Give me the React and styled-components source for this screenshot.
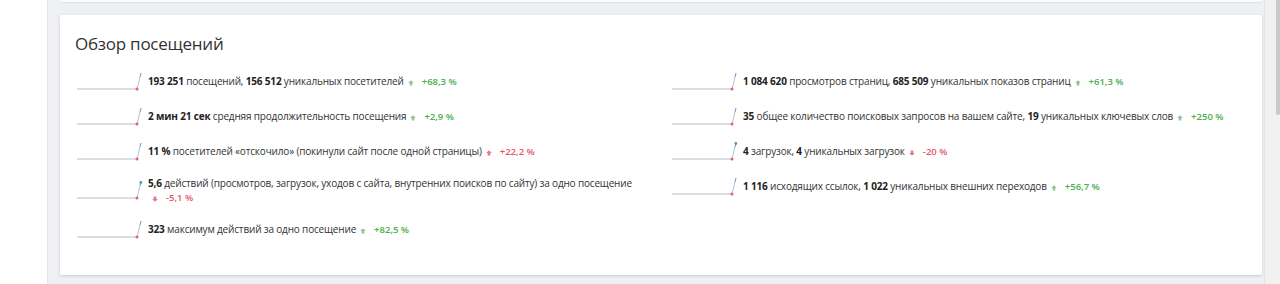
import React from "react";
import styled, { createGlobalStyle } from "styled-components";

const Global = createGlobalStyle`
  html, body { margin: 0; padding: 0; background: #ffffff; }
  body { font-family: "Open Sans", "Liberation Sans", sans-serif; color: #333; }
`;

const Page = styled.div`
  display: flex;
  height: 284px;
  overflow: hidden;
`;

const LeftBlank = styled.div`
  width: 47px;
  flex: none;
  background: #ffffff;
`;

const Main = styled.div`
  flex: 1;
  background: #eef0f3;
  border-left: 1px solid #e3e5e8;
  padding: 0 2px 0 12px;
  display: flex;
  flex-direction: column;
`;

const PrevCard = styled.div`
  height: 2px;
  background: #fbfbfc;
  box-shadow: 0 1px 1px rgba(0, 0, 0, 0.06);
  margin-bottom: 13px;
`;

const Card = styled.div`
  background: #ffffff;
  border-radius: 2px;
  box-shadow: 0 1px 3px rgba(0, 0, 0, 0.16);
  padding: 16px 15px 29px;
  height: 260px;
  box-sizing: border-box;
`;

const Title = styled.h2`
  margin: 0 0 7px;
  font-size: 17px;
  line-height: 26px;
  font-weight: 400;
  letter-spacing: -0.25px;
  color: #333;
`;

const Columns = styled.div`
  display: grid;
  grid-template-columns: 595px 1fr;
`;

const Column = styled.div`
  display: flex;
  flex-direction: column;
`;

const Row = styled.div`
  display: flex;
  align-items: center;
  padding: 7px 0;
  min-height: 21px;
`;

const Spark = styled.svg`
  flex: none;
  width: 68px;
  height: 21px;
  margin-right: 5px;
`;

const Text = styled.div`
  font-size: 10px;
  line-height: 14px;
  letter-spacing: -0.17px;
  color: #333;
  b { font-weight: 700; color: #222; }
`;

const Delta = styled.span`
  display: inline-flex;
  align-items: center;
  margin-left: 4px;
  white-space: nowrap;
  vertical-align: baseline;
`;

const DeltaIcon = styled.svg`
  width: 6px;
  height: 6px;
  margin-right: 8px;
  position: relative;
  top: 1px;
`;

const DeltaText = styled.span`
  font-size: 9.5px;
  font-weight: 600;
  letter-spacing: 0;
  color: ${(p) => (p.$good ? "#4cae4c" : "#e5566c")};
`;

const Scrollbar = styled.div`
  width: 15px;
  flex: none;
  background: #f1f1f2;
  border-left: 1px solid #e4e4e6;
  display: flex;
  justify-content: flex-end;
`;

const Thumb = styled.div`
  width: 4px;
  height: 115px;
  background: #c9c9cc;
  border-radius: 0 0 2px 2px;
`;

function Sparkline({ topDot }) {
  return (
    <Spark viewBox="0 0 68 21">
      <line x1="2" y1="18" x2="62" y2="18" stroke="#b3bfcc" strokeWidth="1" />
      <line x1="62" y1="18" x2="65" y2="6" stroke="#b6c2d0" strokeWidth="1" />
      <line x1="65" y1="6" x2="66" y2="2" stroke="#5d97d6" strokeWidth="1" />
      {topDot && <circle cx="65.8" cy="2.5" r="1.4" fill="#3fa7a0" />}
      <circle cx="62" cy="18" r="1.5" fill="#ee5a76" />
    </Spark>
  );
}

function Change({ value, up, good }) {
  const fill = good ? "#93c793" : "#e7788a";
  return (
    <Delta>
      <DeltaIcon viewBox="0 0 6 6">
        {up ? (
          <path d="M3 0.3 L5.8 3 L4.3 3 L4.3 5.6 L1.7 5.6 L1.7 3 L0.2 3 Z" fill={fill} />
        ) : (
          <path d="M3 5.7 L5.8 3 L4.3 3 L4.3 0.4 L1.7 0.4 L1.7 3 L0.2 3 Z" fill={fill} />
        )}
      </DeltaIcon>
      <DeltaText $good={good}>{value}</DeltaText>
    </Delta>
  );
}

const left = [
  {
    body: (
      <>
        <b>193 251</b> посещений, <b>156 512</b> уникальных посетителей
      </>
    ),
    change: { value: "+68,3 %", up: true, good: true },
  },
  {
    body: (
      <>
        <b>2 мин 21 сек</b> средняя продолжительность посещения
      </>
    ),
    change: { value: "+2,9 %", up: true, good: true },
  },
  {
    body: (
      <>
        <b>11 %</b> посетителей «отскочило» (покинули сайт после одной страницы)
      </>
    ),
    change: { value: "+22,2 %", up: true, good: false },
  },
  {
    body: (
      <>
        <b>5,6</b> действий (просмотров, загрузок, уходов с сайта, внутренних поисков по сайту) за одно посещение
      </>
    ),
    change: { value: "-5,1 %", up: false, good: false },
    topDot: true,
    wrap: true,
  },
  {
    body: (
      <>
        <b>323</b> максимум действий за одно посещение
      </>
    ),
    change: { value: "+82,5 %", up: true, good: true },
  },
];

const right = [
  {
    body: (
      <>
        <b>1 084 620</b> просмотров страниц, <b>685 509</b> уникальных показов страниц
      </>
    ),
    change: { value: "+61,3 %", up: true, good: true },
  },
  {
    body: (
      <>
        <b>35</b> общее количество поисковых запросов на вашем сайте, <b>19</b> уникальных ключевых слов
      </>
    ),
    change: { value: "+250 %", up: true, good: true },
  },
  {
    body: (
      <>
        <b>4</b> загрузок, <b>4</b> уникальных загрузок
      </>
    ),
    change: { value: "-20 %", up: false, good: false },
    topDot: true,
  },
  {
    body: (
      <>
        <b>1 116</b> исходящих ссылок, <b>1 022</b> уникальных внешних переходов
      </>
    ),
    change: { value: "+56,7 %", up: true, good: true },
  },
];

function StatRow({ item }) {
  return (
    <Row>
      <Sparkline topDot={item.topDot} />
      <Text>
        {item.body}
        {item.wrap && <br />}
        <Change {...item.change} />
      </Text>
    </Row>
  );
}

export default function App() {
  return (
    <>
      <Global />
      <Page>
        <LeftBlank />
        <Main>
          <PrevCard />
          <Card>
            <Title>Обзор посещений</Title>
            <Columns>
              <Column>
                {left.map((it, i) => (
                  <StatRow key={i} item={it} />
                ))}
              </Column>
              <Column>
                {right.map((it, i) => (
                  <StatRow key={i} item={it} />
                ))}
              </Column>
            </Columns>
          </Card>
        </Main>
        <Scrollbar>
          <Thumb />
        </Scrollbar>
      </Page>
    </>
  );
}
